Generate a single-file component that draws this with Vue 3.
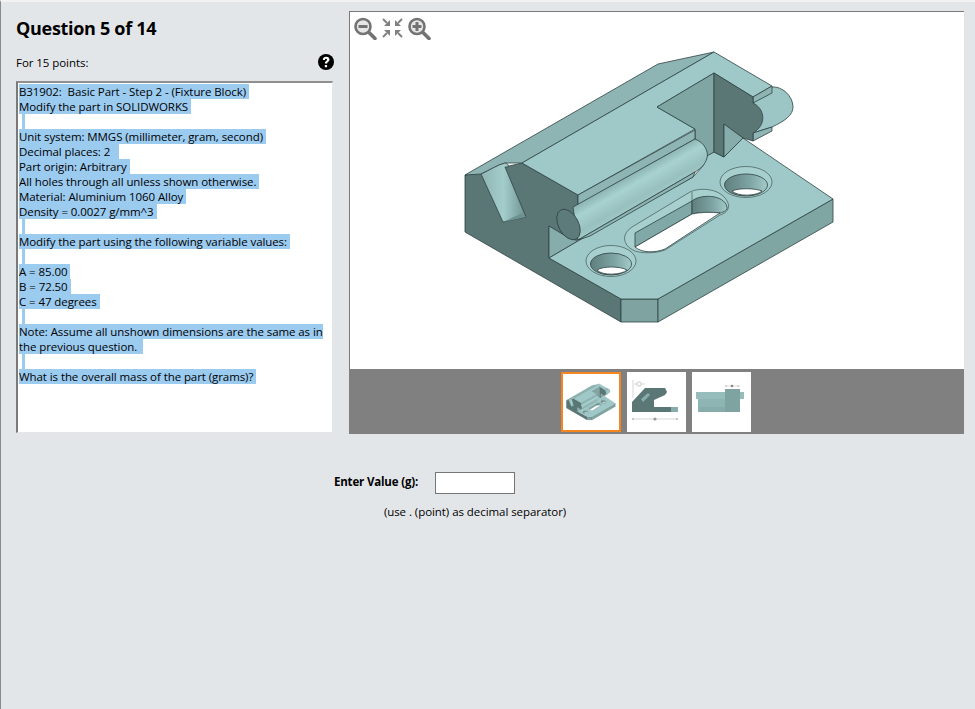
<script setup>
const lines = [
  'B31902:  Basic Part - Step 2 - (Fixture Block) ',
  'Modify the part in SOLIDWORKS ',
  '',
  'Unit system: MMGS (millimeter, gram, second) ',
  'Decimal places: 2   ',
  'Part origin: Arbitrary ',
  'All holes through all unless shown otherwise. ',
  'Material: Aluminium 1060 Alloy ',
  'Density = 0.0027 g/mm^3 ',
  '',
  'Modify the part using the following variable values: ',
  '',
  'A = 85.00 ',
  'B = 72.50 ',
  'C = 47 degrees ',
  '',
  'Note: Assume all unshown dimensions are the same as in',
  'the previous question.  ',
  '',
  'What is the overall mass of the part (grams)? '
]
</script>

<template>
  <div class="page">
    <div class="top">
      <section class="left">
        <h1 class="title">Question 5 of 14</h1>
        <div class="points">
          <span>For 15 points:</span>
          <svg class="help" viewBox="0 0 16 16" width="16" height="16">
            <circle cx="8" cy="8" r="8" fill="#000" />
            <path d="M4.800 6C4.900 4 6.300 2.800 8.200 2.800c2 0 3.300 1.200 3.300 2.800 0 1.200-.7 1.900-1.500 2.500-.6.400-.8.700-.8 1.300v.2H6.900v-.5c0-1.100.4-1.600 1.200-2.200.6-.4.900-.7.900-1.200 0-.5-.4-.9-1-.9-.7 0-1.100.4-1.200 1.200z" fill="#fff" />
            <rect x="6.800" y="10.900" width="2.300" height="2.300" rx=".3" fill="#fff" />
          </svg>
        </div>
        <div class="prompt">
          <div v-for="(line, i) in lines" :key="i" class="line">
            <span v-if="line" class="sel">{{ line }}</span>
            <span v-else class="sel blank"></span>
          </div>
        </div>
      </section>

      <section class="viewer">
        <div class="stage">
          <svg class="part" viewBox="349 12 615 357" width="615" height="357">
            <defs>
              <linearGradient id="cyl" gradientUnits="userSpaceOnUse" x1="640" y1="169" x2="657" y2="199">
                <stop offset="0" stop-color="#8ab3b2" />
                <stop offset="0.3" stop-color="#a8d2d0" />
                <stop offset="0.72" stop-color="#97c0be" />
                <stop offset="1" stop-color="#a3cdcb" />
              </linearGradient>
              <linearGradient id="slant" x1="0" y1="0" x2="1" y2="0">
                <stop offset="0" stop-color="#8fb4b3" />
                <stop offset="0.5" stop-color="#a3cdcb" />
                <stop offset="1" stop-color="#6d9291" />
              </linearGradient>
              <linearGradient id="wall" x1="0" y1="0" x2="1" y2="0">
                <stop offset="0" stop-color="#5f7f7e" />
                <stop offset="0.6" stop-color="#7fa5a4" />
                <stop offset="1" stop-color="#a3cbca" />
              </linearGradient>
              <g id="part" stroke="#2f4342" stroke-width="0.8" stroke-linejoin="round">
                <!-- front walls -->
                <path d="M465 175V232L621 322V299L549 258V226L569 238 580 240 578 205V195L522 163 505 167 488 172Z" fill="#5a7675" />
                <path d="M621 299H658V322H621Z" fill="#7ea3a1" />
                <path d="M658 299L833 199V222L658 322Z" fill="#80a6a4" />
                <path d="M549 226V258L578 241 569 238Z" fill="#86adab" />
                <!-- base top -->
                <path d="M549 258L578 241 693 177 703 166 707 155 714 152 724 157 743 138 833 199 658 299H621Z" fill="#9fc9c8" />
                <!-- peg behind -->
                <path d="M753 103L772 87C782 86 793 96 793 107 793 115 785 121 772 127L753 133Z" fill="#9cc6c5" />
                <path d="M753 133L772 127V131L753 141Z" fill="#8eb5b4" />
                <!-- back strip -->
                <path d="M465 175L658 64 714 52 522 163 505 163C497 165 490 170 481 174Z" fill="#8eb5b4" />
                <!-- upper top face -->
                <path d="M522 163L714 52 772 86 753 97 714 73 657 107 695 129 578 195Z" fill="#9fc9c8" />
                <path d="M772 86V93L753 103V97Z" fill="#8eb5b4" />
                <!-- pocket -->
                <path d="M657 107L714 73V152L707 156 695 139V129Z" fill="#80a6a4" />
                <path d="M714 73L753 97V103C764 108 768 124 753 133V141L743 138 724 124V157L714 152Z" fill="#5a7675" />
                <path d="M724 124L743 138 724 157Z" fill="#86adab" />
                <!-- strip and shaft -->
                <path d="M578 195L695 130V139L578 205Z" fill="#8eb5b4" />
                <path d="M573 207L695 139C704 142 709 152 707 158 705 165 701 168 695 172L578 240Z" fill="url(#cyl)" />
                <path d="M695 172L693 177 590 236 578 240Z" fill="#8eb5b4" />
                <ellipse cx="568.500" cy="224.500" rx="10" ry="16.500" transform="rotate(-28 568.500 224.500)" fill="#5d7b7a" />
                <!-- slanted groove -->
                <path d="M481 174C490 170 497 165 505 163 510 164 509 168 505 167L526 217 503 222Z" fill="url(#slant)" />
                <path d="M503 222L526 217 522 213Z" fill="#6d9291" stroke="none" />
                <!-- hole near -->
                <ellipse cx="611" cy="261" rx="25" ry="15.500" fill="#a7cfcd" stroke-width=".6" />
                <ellipse cx="611" cy="264" rx="20.500" ry="11" fill="url(#wall)" />
                <path d="M597 270C603 266 620 266 627 270 622 275 602 276 597 270Z" fill="#fff" />
                <!-- hole far -->
                <ellipse cx="746" cy="182" rx="26" ry="15.500" fill="#a7cfcd" stroke-width=".6" />
                <ellipse cx="746" cy="185" rx="21.500" ry="11" fill="url(#wall)" />
                <path d="M732 191C738 188 755 188 762 191 757 196 738 197 732 191Z" fill="#fff" />
                <!-- slot -->
                <path d="M632 227L690 192C700 187 722 188 728 203 730 208 727 213 720 215L665 250C655 254 640 253 635 251 625 247 619 236 632 227Z" fill="#a7cfcd" stroke-width=".6" />
                <path d="M635 233L692 201V214L635 247Z" fill="#7fa8a7" />
                <path d="M692 201C700 194 724 194 727 207 728 210 724 212 720 213 712 212 700 212 692 214Z" fill="url(#wall)" />
                <path d="M635 247L692 214C700 212 712 212 720 213L665 249C655 253 642 253 635 247Z" fill="#fff" />
                <path d="M692 192V201" stroke-width=".6" fill="none" />
              </g>
            </defs>
            <use href="#part" />
          </svg>
          <div class="tools">
            <svg width="26" height="24" viewBox="0 0 26 24">
              <circle cx="10" cy="10.500" r="7.500" fill="#e7e7e7" stroke="#737373" stroke-width="2.600" />
              <path d="M16 16.500l6 6" stroke="#737373" stroke-width="3.600" stroke-linecap="round" />
              <rect x="5.500" y="9" width="9" height="3" fill="#737373" />
            </svg>
            <svg width="26" height="24" viewBox="0 0 26 24" fill="#808080" stroke="#808080">
              <path d="M10 10H4L10 4Z" stroke="none" />
              <path d="M3 3L7 7" stroke-width="2" fill="none" />
              <path d="M15 10H21L15 4Z" stroke="none" />
              <path d="M22 3L18 7" stroke-width="2" fill="none" />
              <path d="M10 14H4L10 20Z" stroke="none" />
              <path d="M3 21L7 17" stroke-width="2" fill="none" />
              <path d="M15 14H21L15 20Z" stroke="none" />
              <path d="M22 21L18 17" stroke-width="2" fill="none" />
            </svg>
            <svg width="26" height="24" viewBox="0 0 26 24">
              <circle cx="10" cy="10.500" r="7.500" fill="#e7e7e7" stroke="#737373" stroke-width="2.600" />
              <path d="M16 16.500l6 6" stroke="#737373" stroke-width="3.600" stroke-linecap="round" />
              <path d="M5.500 9h3V6h3v3h3v3h-3v3h-3v-3h-3z" fill="#737373" />
            </svg>
          </div>
        </div>
        <div class="strip">
          <div class="thumb active">
            <svg viewBox="455 45 390 285" width="52" height="38"><use href="#part" /></svg>
          </div>
          <div class="thumb narrow">
            <svg viewBox="0 0 59 60" width="59" height="60">
              <path d="M5 40V30L18 16H38L40 20 38 23 27 28V35H51V40Z" fill="#5a7675" />
              <path d="M44 35h7v5h-7zM14 27l7-6 2 2-7 7z" fill="#86adab" />
              <g fill="none" stroke="#bdbdbd" stroke-width=".6">
                <path d="M6 8V26M6 47H50M7 12H18" />
              </g>
              <circle cx="12" cy="12" r="2.200" fill="#fff" stroke="#aaa" stroke-width=".6" />
              <circle cx="28" cy="47" r="1.600" fill="#999" />
              <circle cx="6" cy="47" r=".8" fill="#888" /><circle cx="50" cy="47" r=".8" fill="#888" />
            </svg>
          </div>
          <div class="thumb narrow">
            <svg viewBox="0 0 59 60" width="59" height="60">
              <path d="M6 27H48V40H6Z" fill="#8eb5b4" />
              <path d="M4 20H52V27H4Z" fill="#96bcbb" />
              <path d="M33 17H48V40H33Z" fill="#7ea3a1" />
              <path d="M7 35H33V40H7Z" fill="#86adab" />
              <path d="M33 14h15" stroke="#bbb" stroke-width=".5" />
              <circle cx="40" cy="14" r="1.300" fill="#888" />
              <circle cx="34" cy="14" r=".6" fill="#888" /><circle cx="46" cy="14" r=".6" fill="#888" />
            </svg>
          </div>
        </div>
      </section>
    </div>

    <div class="answer">
      <div class="entry">
        <label class="entry-label" for="value">Enter Value (g):</label>
        <input id="value" class="entry-input" type="text" />
      </div>
      <p class="hint">(use . (point) as decimal separator)</p>
    </div>
  </div>
</template>

<style>
html, body { margin: 0; background: #e3e6e9; }
</style>

<style scoped>
.page {
  box-sizing: border-box;
  width: 975px;
  height: 709px;
  overflow: hidden;
  background: #e3e6e9;
  border-top: 2px solid #f2f2f2;
  border-left: 1px solid #8a8a8a;
  font-family: "Open Sans", "Noto Sans", sans-serif;
  font-size: 11.500px;
  color: #000;
}
.top {
  display: flex;
  gap: 16px;
  padding: 9px 0 0 15px;
}
.left { width: 317px; }
.title {
  margin: 5px 0 0;
  font-size: 18px;
  line-height: 24px;
  font-weight: 700;
  letter-spacing: -0.3px;
}
.points {
  display: flex;
  justify-content: space-between;
  align-items: center;
  height: 20px;
  margin-top: 12px;
  letter-spacing: -0.06px;
}
.help { margin-right: -1px; margin-top: -1px; }
.prompt {
  box-sizing: border-box;
  height: 352px;
  margin-top: 9px;
  padding: 1px 1px;
  background: #fff;
  border: 1px solid #e6e6e6;
  border-top: 2px solid #8f8f8f;
  border-left: 2px solid #7a7a7a;
  overflow: hidden;
}
.line { height: 15px; line-height: 15px; white-space: pre; letter-spacing: -0.08px; }
.sel { background: #9ccbf0; display: inline-block; height: 15px; }
.blank { width: 3px; margin-left: 3px; vertical-align: top; }
.viewer { width: 615px; height: 423px; display: flex; flex-direction: column; }
.stage {
  position: relative;
  box-sizing: border-box;
  height: 358px;
  background: #fff;
  border-top: 1px solid #7a7a7a;
  border-left: 1px solid #7a7a7a;
}
.part { display: block; margin-left: -1px; }
.tools {
  position: absolute;
  top: 4px;
  left: 3px;
  display: flex;
  gap: 1px;
}
.strip {
  display: flex;
  flex: 1;
  justify-content: center;
  align-items: flex-start;
  gap: 5px;
  padding: 3px 2px 0 0;
  background: #808080;
}
.thumb {
  box-sizing: border-box;
  width: 60px;
  height: 60px;
  display: flex;
  align-items: center;
  justify-content: center;
  background: #fff;
  overflow: hidden;
}
.thumb.narrow { width: 59px; margin-left: 1px; }
.thumb svg { filter: blur(0.4px); }
.thumb.active { border: 2px solid #f5861f; }
.answer {
  box-sizing: border-box;
  width: 948px;
  display: flex;
  flex-direction: column;
  align-items: center;
  margin-top: 38px;
}
.entry { display: flex; align-items: center; gap: 17px; margin-right: 101px; }
.entry-label { font-weight: 700; letter-spacing: -0.17px; padding-bottom: 3px; }
.entry-input {
  box-sizing: border-box;
  width: 80px;
  height: 22px;
  margin: 0;
  padding: 0;
  background: #fff;
  border: 1px solid #767676;
}
.hint {
  margin: 10px 0 0;
  line-height: 16px;
  letter-spacing: -0.06px;
}
</style>
